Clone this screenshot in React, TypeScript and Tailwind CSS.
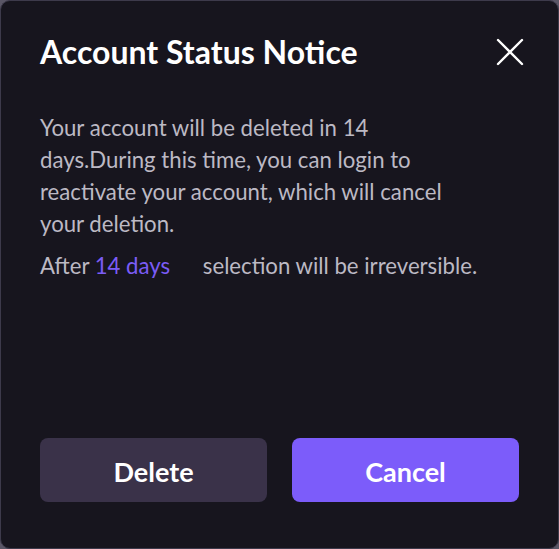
import React from "react";

export default function App() {
  return (
    <div className="w-[559px] h-[549px] bg-[#5a5666]" style={{ fontFamily: "Lato, 'Noto Sans', sans-serif" }}>
      <div className="w-full h-full rounded-[10px] border border-[#3d3a4b] bg-[#17151e] flex flex-col px-[39px] pt-[27px] pb-[46px]">
        <div className="flex items-center justify-between">
          <h1 className="text-[32px] leading-[48px] font-bold text-white">Account Status Notice</h1>
          <svg width="28" height="28" viewBox="0 0 28 28" className="mr-[-5px]">
            <path d="M2 2 L26 26 M26 2 L2 26" stroke="#ffffff" strokeWidth="2.4" strokeLinecap="round" />
          </svg>
        </div>
        <div className="mt-[36px] max-w-[446px] text-[22.2px] leading-[32px] text-[#bcb9c4]">
          <p>Your account will be deleted in 14 days.During this time, you can login to reactivate your account, which will cancel your deletion.</p>
          <p className="mt-[10px] whitespace-nowrap">
            After <span className="text-[#7b5cf6] mr-[27px]">14 days</span> selection will be irreversible.
          </p>
        </div>
        <div className="flex-1" />
        <div className="flex gap-[25px]">
          <button className="flex-1 h-[64px] pt-[4px] rounded-[8px] bg-[#3a3249] text-white text-[27px] font-bold">Delete</button>
          <button className="flex-1 h-[64px] pt-[4px] rounded-[8px] bg-[#7c5cfa] text-white text-[27px] font-bold">Cancel</button>
        </div>
      </div>
    </div>
  );
}
